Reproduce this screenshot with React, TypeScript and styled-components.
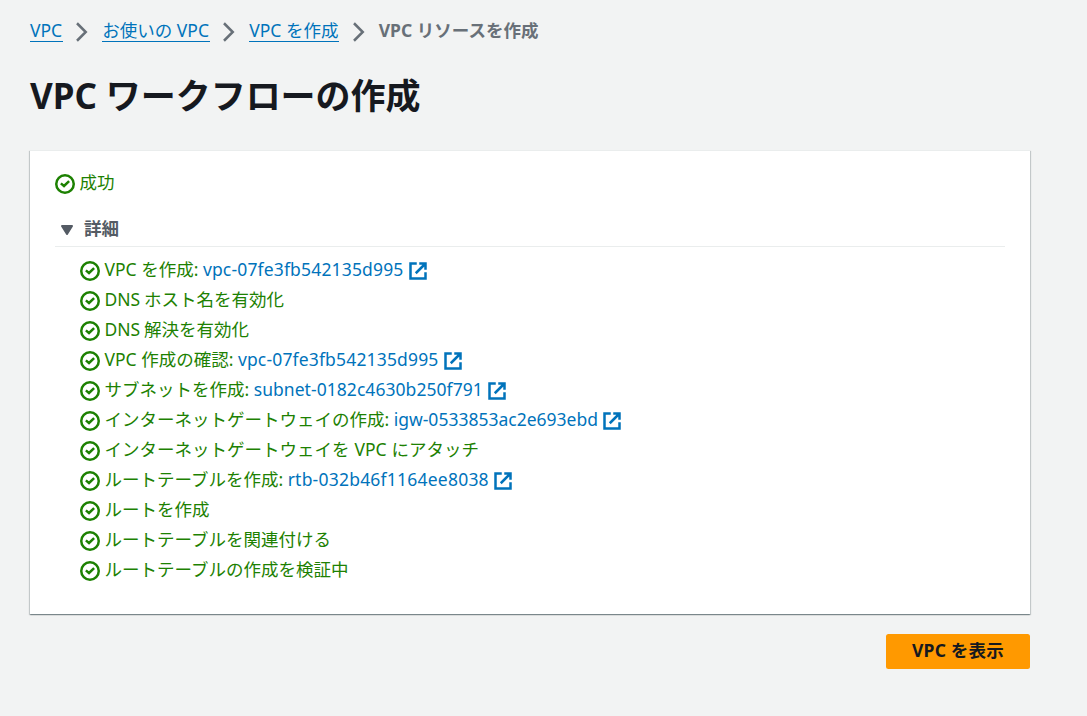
import React from 'react';
import styled, { createGlobalStyle } from 'styled-components';

const GlobalStyle = createGlobalStyle`
  * { box-sizing: border-box; }
  body {
    margin: 0;
    min-height: 100vh;
    background: #f2f3f3;
    font-family: 'Noto Sans', 'Noto Sans CJK JP', sans-serif;
    font-size: 17.5px;
    line-height: 28px;
    color: #16191f;
  }
`;

const Page = styled.div`
  display: flex;
  flex-direction: column;
  width: 1060px;
  padding: 16px 30px 0;
`;

const Breadcrumbs = styled.nav`
  display: flex;
  align-items: flex-start;
  height: 30px;
  white-space: nowrap;
`;

const Crumb = styled.a<{ $width: number }>`
  width: ${(p) => p.$width}px;
  height: 26px;
  border-bottom: 1px solid #0073bb;
  color: #0073bb;
  text-decoration: none;
`;

const CurrentCrumb = styled.span`
  color: #687078;
  font-weight: 700;
`;

const Separator = styled.svg`
  flex: none;
  width: 20px;
  height: 20px;
  margin: 6px 10px 0 9.75px;
  fill: none;
  stroke: #687078;
  stroke-width: 2;
`;

const Title = styled.h1`
  margin: 27px 0 0;
  height: 45px;
  font-size: 35px;
  line-height: 45px;
  font-weight: 700;
  letter-spacing: -0.05px;
  white-space: nowrap;
`;

const Card = styled.section`
  margin-top: 32px;
  height: 464px;
  padding: 18px 25px 0;
  background: #fff;
  border-top: 1px solid #eaeded;
  box-shadow: 0 1px 1px 0 rgba(0, 28, 36, 0.3), 1px 1px 1px 0 rgba(0, 28, 36, 0.15),
    -1px 1px 1px 0 rgba(0, 28, 36, 0.15);
`;

const Status = styled.div`
  display: flex;
  align-items: flex-start;
  height: 30px;
  line-height: 26px;
  color: #1d8102;
  white-space: nowrap;
`;

const StatusSvg = styled.svg`
  flex: none;
  width: 20px;
  height: 20px;
  margin: 5px 4.5px 0 0;
  fill: none;
  stroke: currentColor;
  stroke-width: 2;
`;

const DetailsHeader = styled.div`
  display: flex;
  align-items: flex-start;
  height: 33px;
  margin-top: 15px;
  padding-left: 5px;
  border-bottom: 1px solid #eaeded;
  color: #545b64;
  font-weight: 700;
`;

const Caret = styled.svg`
  width: 14px;
  height: 12px;
  margin: 10px 10px 0 0;
  fill: #545b64;
  stroke: #545b64;
  stroke-width: 2;
  stroke-linejoin: round;
`;

const Steps = styled.div`
  padding: 9px 0 0 25px;
`;

const Label = styled.span<{ $wordSpacing: number }>`
  word-spacing: ${(p) => p.$wordSpacing}px;
`;

const Resource = styled.a`
  display: flex;
  margin-left: 4.5px;
  color: #0073bb;
  text-decoration: none;
`;

const Id = styled.span<{ $spacing: number }>`
  letter-spacing: ${(p) => p.$spacing}px;
`;

const ExternalSvg = styled.svg`
  flex: none;
  width: 20px;
  height: 20px;
  margin: 5px 0 0 4px;
  fill: none;
  stroke: currentColor;
  stroke-width: 2;
`;

const Actions = styled.div`
  display: flex;
  justify-content: flex-end;
  margin-top: 20px;
`;

const PrimaryButton = styled.button`
  width: 144px;
  height: 35px;
  padding: 0 0 3px;
  border: 0;
  border-radius: 2.5px;
  background: #ff9900;
  color: #16191f;
  font: inherit;
  font-weight: 700;
  letter-spacing: 0.2px;
  white-space: nowrap;
`;

const Success = () => (
  <StatusSvg viewBox="0 0 16 16">
    <circle cx="8" cy="8" r="7" />
    <path d="m4.7 7.5 2.5 2.1 4.1-3.9" />
  </StatusSvg>
);

const Chevron = () => (
  <Separator viewBox="0 0 16 16">
    <path d="m4 1 7 7-7 7" />
  </Separator>
);

const External = () => (
  <ExternalSvg viewBox="0 0 16 16">
    <path d="M9 2h5v5M6.2 9.8 14 2M14 9.048V14H2V2h5" />
  </ExternalSvg>
);

type Step = { label: string; wordSpacing?: number; id?: string; spacing?: number };

const steps: Step[] = [
  { label: 'VPC を作成:', id: 'vpc-07fe3fb542135d995', spacing: 0.16 },
  { label: 'DNS ホスト名を有効化', wordSpacing: -0.7 },
  { label: 'DNS 解決を有効化', wordSpacing: -0.7 },
  { label: 'VPC 作成の確認:', id: 'vpc-07fe3fb542135d995', spacing: 0.16 },
  { label: 'サブネットを作成:', id: 'subnet-0182c4630b250f791', spacing: 0.05 },
  { label: 'インターネットゲートウェイの作成:', id: 'igw-0533853ac2e693ebd', spacing: 0 },
  { label: 'インターネットゲートウェイを VPC にアタッチ', wordSpacing: 0.4 },
  { label: 'ルートテーブルを作成:', id: 'rtb-032b46f1164ee8038', spacing: 0.22 },
  { label: 'ルートを作成' },
  { label: 'ルートテーブルを関連付ける' },
  { label: 'ルートテーブルの作成を検証中' },
];

export default function App() {
  return (
    <>
      <GlobalStyle />
      <Page>
        <Breadcrumbs>
          <Crumb $width={32.5}>VPC</Crumb>
          <Chevron />
          <Crumb $width={107.25}>お使いの VPC</Crumb>
          <Chevron />
          <Crumb $width={89.75}>VPC を作成</Crumb>
          <Chevron />
          <CurrentCrumb>VPC リソースを作成</CurrentCrumb>
        </Breadcrumbs>
        <Title>VPC ワークフローの作成</Title>
        <Card>
          <Status>
            <Success />
            成功
          </Status>
          <DetailsHeader>
            <Caret viewBox="0 0 14 12">
              <path d="M2 2h10L7 10z" />
            </Caret>
            詳細
          </DetailsHeader>
          <Steps>
            {steps.map((s, i) => (
              <Status key={i}>
                <Success />
                <Label $wordSpacing={s.wordSpacing ?? 0}>{s.label}</Label>
                {s.id && (
                  <Resource>
                    <Id $spacing={s.spacing ?? 0}>{s.id}</Id>
                    <External />
                  </Resource>
                )}
              </Status>
            ))}
          </Steps>
        </Card>
        <Actions>
          <PrimaryButton>VPC を表示</PrimaryButton>
        </Actions>
      </Page>
    </>
  );
}
